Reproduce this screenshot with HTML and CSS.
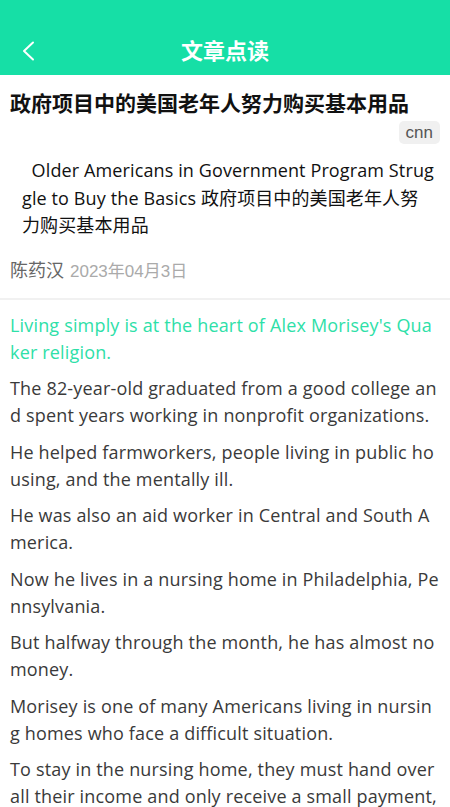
FILE: index.html
```html
<!DOCTYPE html>
<html lang="zh">
<head>
<meta charset="utf-8">
<title>文章点读</title>
<link rel="stylesheet" href="styles.css">
</head>
<body>
<header class="topbar">
  <a class="back" aria-label="返回">
    <svg width="14" height="20" viewBox="0 0 14 20"><path d="M12 1.5 L3 10 L12 18.5" fill="none" stroke="#fff" stroke-width="2" stroke-linecap="round" stroke-linejoin="round"/></svg>
  </a>
  <h1 class="topbar-title">文章点读</h1>
</header>
<section class="intro">
  <h2 class="title">政府项目中的美国老年人努力购买基本用品</h2>
  <div class="source-row"><span class="source">cnn</span></div>
  <p class="subtitle">&nbsp;&nbsp;Older Americans in Government Program Struggle to Buy the Basics 政府项目中的美国老年人努力购买基本用品</p>
  <div class="meta"><span class="author">陈药汉</span><span class="date">2023年04月3日</span></div>
</section>
<article class="content">
  <p class="para active">Living simply is at the heart of Alex Morisey's Quaker religion.</p>
  <p class="para">The 82-year-old graduated from a good college and spent years working in nonprofit organizations.</p>
  <p class="para">He helped farmworkers, people living in public housing, and the mentally ill.</p>
  <p class="para">He was also an aid worker in Central and South America.</p>
  <p class="para">Now he lives in a nursing home in Philadelphia, Pennsylvania.</p>
  <p class="para">But halfway through the month, he has almost no money.</p>
  <p class="para">Morisey is one of many Americans living in nursing homes who face a difficult situation.</p>
  <p class="para">To stay in the nursing home, they must hand over all their income and only receive a small payment, about $30 to $90 a month, to spend on their own needs.</p>
</article>
</body>
</html>
```
FILE: styles.css
```css
* { box-sizing: border-box; }
html, body { margin: 0; padding: 0; }
body {
  width: 450px;
  background: #fff;
  font-family: "Open Sans", "Noto Sans CJK SC", sans-serif;
  overflow: hidden;
  height: 807px;
}
.topbar {
  height: 75px;
  background: #16dfa6;
  display: flex;
  align-items: flex-end;
  justify-content: center;
  padding-bottom: 11px;
  position: relative;
}
.back {
  position: absolute;
  left: 21px;
  bottom: 14px;
  display: flex;
}
.topbar-title {
  margin: 0;
  font-family: "Noto Sans CJK SC", sans-serif;
  font-size: 22px;
  font-weight: 700;
  color: #fff;
  line-height: 30px;
}
.intro {
  padding: 12px 10px 0;
  border-bottom: 2px solid #f1f1f1;
}
.title {
  margin: 0;
  font-family: "Noto Sans CJK SC", sans-serif;
  font-size: 21px;
  font-weight: 700;
  color: #111;
  line-height: 30px;
}
.source-row {
  display: flex;
  justify-content: flex-end;
  margin-top: 4px;
}
.source {
  background: #f0f0f0;
  color: #555;
  font-family: "Liberation Sans", sans-serif;
  font-size: 17px;
  line-height: 23px;
  padding: 0 7px;
  border-radius: 5px;
}
.subtitle {
  margin: 13px 0 0;
  padding: 0 5px 0 12px;
  font-size: 18px;
  line-height: 27.5px;
  letter-spacing: 0.12px;
  color: #111;
  word-break: break-all;
}
.meta {
  margin-top: 16px;
  padding-bottom: 16px;
  display: flex;
  align-items: baseline;
  gap: 6px;
}
.author {
  font-family: "Noto Sans CJK SC", sans-serif;
  font-size: 18px;
  color: #666;
}
.date {
  font-family: "Liberation Sans", "Noto Sans CJK SC", sans-serif;
  font-size: 17px;
  color: #aaa;
}
.content {
  padding: 12px 10px 0;
}
.para {
  margin: 0 0 9.5px;
  font-size: 18px;
  line-height: 27px;
  letter-spacing: 0.17px;
  color: #3a3a3a;
  word-break: break-all;
}
.para.active { color: #2ee0a8; }
```
